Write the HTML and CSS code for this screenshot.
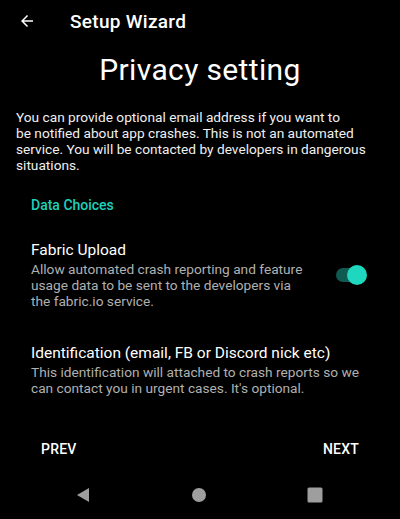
FILE: index.html
```html
<!DOCTYPE html>
<html>
<head>
<meta charset="utf-8">
<link rel="stylesheet" href="styles.css">
</head>
<body>
<div class="screen">
  <header class="toolbar">
    <svg class="back" width="18" height="18" viewBox="0 0 24 24"><path d="M20 11H7.83l5.59-5.59L12 4l-8 8 8 8 1.41-1.41L7.83 13H20v-2z" fill="#fff"/></svg>
    <span class="toolbar-title">Setup Wizard</span>
  </header>
  <h1 class="page-title">Privacy setting</h1>
  <p class="intro">You can provide optional email address if you want to<br>be notified about app crashes. This is not an automated<br>service. You will be contacted by developers in dangerous<br>situations.</p>
  <div class="category">Data Choices</div>
  <div class="pref">
    <div class="pref-text">
      <div class="pref-title">Fabric Upload</div>
      <div class="pref-summary">Allow automated crash reporting and feature<br>usage data to be sent to the developers via<br>the fabric.io service.</div>
    </div>
    <div class="switch"><span class="track"></span><span class="thumb"></span></div>
  </div>
  <div class="pref pref-ident">
    <div class="pref-text">
      <div class="pref-title">Identification (email, FB or Discord nick etc)</div>
      <div class="pref-summary">This identification will attached to crash reports so we<br>can contact you in urgent cases. It's optional.</div>
    </div>
  </div>
  <div class="spacer"></div>
  <div class="buttons">
    <span class="btn">PREV</span>
    <span class="btn">NEXT</span>
  </div>
  <nav class="navbar">
    <svg width="14" height="16" viewBox="0 0 14 16"><path d="M13 1 L1 8 L13 15 Z" fill="#9e9e9e"/></svg>
    <svg width="16" height="16" viewBox="0 0 16 16"><circle cx="8" cy="8" r="7" fill="#9e9e9e"/></svg>
    <svg width="16" height="16" viewBox="0 0 16 16"><rect x="0.5" y="0.5" width="15" height="15" rx="1.5" fill="#9e9e9e"/></svg>
  </nav>
</div>
</body>
</html>
```
FILE: styles.css
```css
html, body {
  margin: 0;
  padding: 0;
  background: #000;
}
body {
  font-family: Roboto, "Noto Sans", sans-serif;
  color: #fff;
}
.screen {
  width: 400px;
  height: 519px;
  display: flex;
  flex-direction: column;
  overflow: hidden;
}
.toolbar {
  height: 42px;
  display: flex;
  align-items: center;
  padding-left: 18px;
  box-sizing: border-box;
}
.back {
  display: block;
  margin-right: 34px;
}
.toolbar-title {
  font-size: 19px;
  font-weight: 500;
  letter-spacing: 0.3px;
}
.page-title {
  margin: 9px 0 0;
  font-size: 30px;
  line-height: 38px;
  font-weight: 400;
  letter-spacing: 0.35px;
  text-align: center;
}
.intro {
  margin: 20px 16px 0;
  font-size: 13.7px;
  line-height: 16px;
  color: #f0f0f0;
}
.category {
  margin: 24px 0 0 31px;
  font-size: 14px;
  font-weight: 500;
  color: #1fd1bb;
  line-height: 16px;
}
.pref {
  display: flex;
  align-items: center;
  padding: 0 34px 0 31px;
  margin-top: 27px;
}
.pref-ident {
  margin-top: 34px;
}
.pref-text {
  flex: 1;
}
.pref-title {
  font-size: 15.5px;
  line-height: 20px;
  color: #fff;
}
.pref-summary {
  margin-top: 1px;
  font-size: 13.7px;
  line-height: 16px;
  color: #b0b0b0;
}
.switch {
  position: relative;
  width: 32px;
  height: 20px;
  flex: none;
  margin-left: 16px;
}
.track {
  position: absolute;
  left: 2px;
  top: 3px;
  width: 28px;
  height: 14px;
  border-radius: 7px;
  background: #0f5a51;
}
.thumb {
  position: absolute;
  right: -1px;
  top: 0;
  width: 20px;
  height: 20px;
  border-radius: 50%;
  background: #1fd6bf;
}
.spacer {
  flex: 1;
}
.buttons {
  display: flex;
  justify-content: space-between;
  padding: 0 41px;
  height: 36px;
  margin-bottom: 4px;
  align-items: center;
}
.btn {
  font-size: 14px;
  font-weight: 500;
  letter-spacing: 0.2px;
}
.navbar {
  height: 48px;
  display: flex;
  align-items: center;
  justify-content: space-between;
  padding: 0 77px 0 76px;
  box-sizing: border-box;
}
.navbar svg {
  display: block;
}
```
